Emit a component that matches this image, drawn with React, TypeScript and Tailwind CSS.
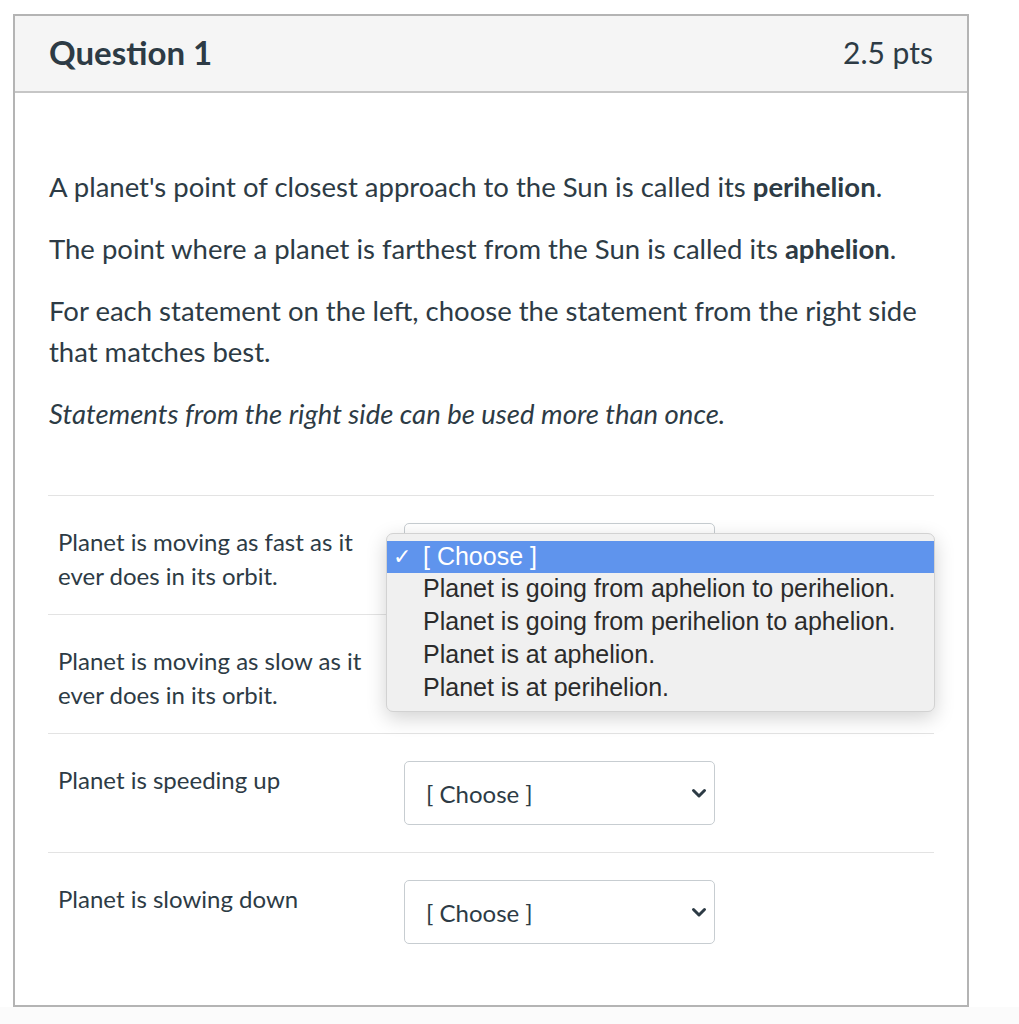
import React from "react";

const Chevron = () => (
  <svg width="16" height="11" viewBox="0 0 16 11" className="shrink-0">
    <path d="M2.5 2.5 L8 8 L13.5 2.5" fill="none" stroke="#2d3b45" strokeWidth="3" strokeLinecap="round" strokeLinejoin="round" />
  </svg>
);

const SelectBox = () => (
  <div className="w-[311px] h-[64px] border border-[#c7cdd1] rounded-[5px] bg-white flex items-center justify-between pl-[21px] pr-[7px]">
    <span className="text-[24px] text-[#2d3b45] whitespace-nowrap">[ Choose ]</span>
    <Chevron />
  </div>
);

const options = [
  "Planet is going from aphelion to perihelion.",
  "Planet is going from perihelion to aphelion.",
  "Planet is at aphelion.",
  "Planet is at perihelion.",
];

const Row = ({ lines, open, last }: { lines: string[]; open?: boolean; last?: boolean }) => (
  <div className={`flex h-[119px] pt-[27px] ${last ? "" : "border-b border-[#e3e3e3]"}`}>
    <div className="w-[356px] pl-[10px] pt-[2px] text-[24px] leading-[34px] text-[#2d3b45]">
      {lines.map((l, i) => (
        <div key={i} className="whitespace-nowrap">{l}</div>
      ))}
    </div>
    <div className="relative">
      <SelectBox />
      {open && (
        <div
          className="absolute left-[-18px] top-[10px] w-[549px] h-[179px] bg-[#f0f0f0] rounded-[7px] border border-[#d2d2d2] shadow-[0_6px_20px_rgba(0,0,0,0.18)] pt-[7px] z-10"
          style={{ fontFamily: '"Liberation Sans", Arial, sans-serif' }}
        >
          <div className="h-[32px] bg-[#5f94ed] flex items-center text-white text-[25px] whitespace-nowrap pb-[2px]">
            <span className="w-[36px] pl-[6px] text-[22px]">✓</span>
            <span>[ Choose ]</span>
          </div>
          {options.map((o) => (
            <div key={o} className="h-[33px] flex items-center pl-[36px] pb-[2px] text-[25px] text-[#2b2b2b] whitespace-nowrap">
              {o}
            </div>
          ))}
        </div>
      )}
    </div>
  </div>
);

export default function App() {
  return (
    <div className="min-h-[1024px] bg-[#fbfbfb]" style={{ fontFamily: 'Lato, "Open Sans", sans-serif' }}>
      <div className="pt-[14px] pl-[13px] bg-white">
        <div className="w-[956px] h-[993px] border-2 border-[#b4b4b4] bg-white">
          <div className="h-[77px] bg-[#f5f5f5] border-b-2 border-[#c6c6c6] flex items-center justify-between px-[34px] pb-[2px]">
            <span className="text-[33px] font-bold text-[#2d3b45]">Question 1</span>
            <span className="text-[30px] text-[#2d3b45]">2.5 pts</span>
          </div>
          <div className="px-[33px] pt-[73px] text-[27.5px] leading-[41px] text-[#2d3b45]">
            <p className="mb-[21px] pl-[1px]">
              A planet's point of closest approach to the Sun is called its <b>perihelion</b>.
            </p>
            <p className="mb-[21px] pl-[1px]">
              The point where a planet is farthest from the Sun is called its <b>aphelion</b>.
            </p>
            <p className="mb-[21px] pl-[1px]">
              For each statement on the left, choose the statement from the right side that matches best.
            </p>
            <p className="mb-[61px] pl-[1px] italic">Statements from the right side can be used more than once.</p>
            <div className="border-t border-[#e3e3e3]">
              <Row lines={["Planet is moving as fast as it", "ever does in its orbit."]} open />
              <Row lines={["Planet is moving as slow as it", "ever does in its orbit."]} />
              <Row lines={["Planet is speeding up"]} />
              <Row lines={["Planet is slowing down"]} last />
            </div>
          </div>
        </div>
      </div>
    </div>
  );
}
